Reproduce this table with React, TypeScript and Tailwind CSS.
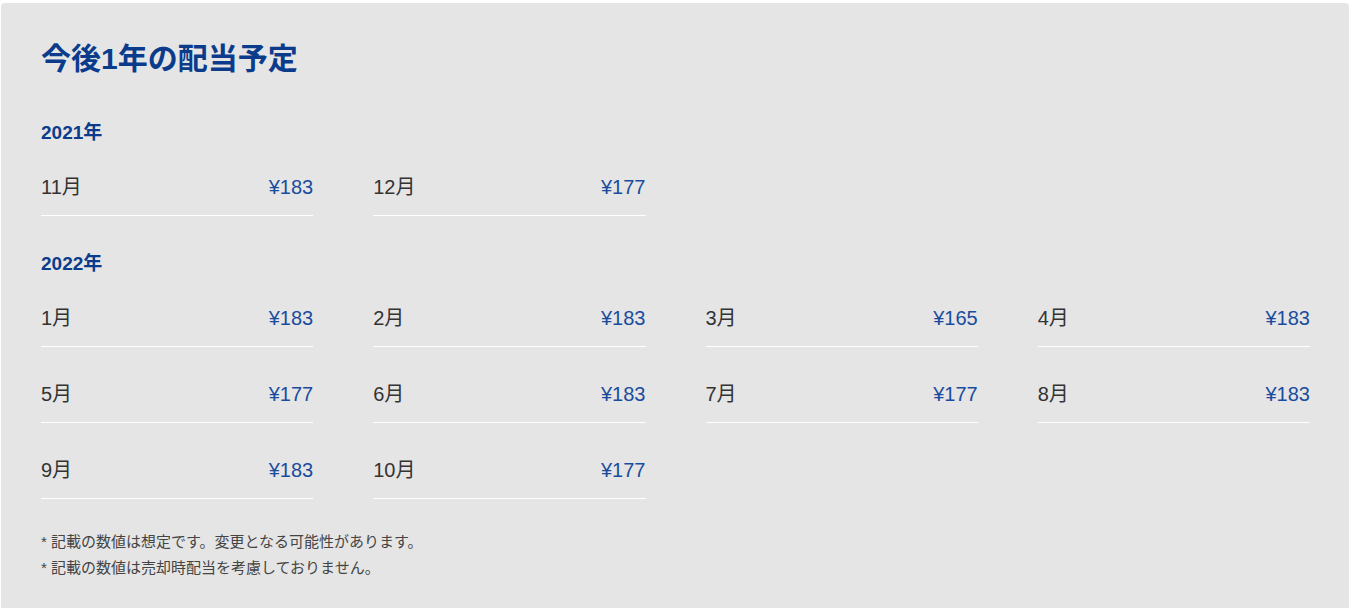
import React from 'react';

type Payout = { month: string; amount: string };

const schedule: { year: string; items: Payout[] }[] = [
  {
    year: '2021年',
    items: [
      { month: '11月', amount: '¥183' },
      { month: '12月', amount: '¥177' },
    ],
  },
  {
    year: '2022年',
    items: [
      { month: '1月', amount: '¥183' },
      { month: '2月', amount: '¥183' },
      { month: '3月', amount: '¥165' },
      { month: '4月', amount: '¥183' },
      { month: '5月', amount: '¥177' },
      { month: '6月', amount: '¥183' },
      { month: '7月', amount: '¥177' },
      { month: '8月', amount: '¥183' },
      { month: '9月', amount: '¥183' },
      { month: '10月', amount: '¥177' },
    ],
  },
];

const App: React.FC = () => {
  return (
    <div
      className="min-h-screen bg-white pt-[3px] px-[1px]"
      style={{ fontFamily: '"Liberation Sans", Arial, "Noto Sans CJK JP", sans-serif' }}
    >
      <div className="bg-[#e5e5e5] rounded-[4px] pt-[38px] pb-[40px] pl-10 pr-[39px]">
        {/* Title */}
        <h1 className="text-[30px] leading-[36px] font-bold text-[#0b3c8c]">今後1年の配当予定</h1>

        {/* Schedule */}
        <div className="mt-[42px] flex flex-col gap-[34px]">
          {schedule.map((section) => (
            <div key={section.year}>
              <h2 className="text-[19px] leading-[28px] font-bold text-[#0b3c8c]">{section.year}</h2>
              <div className="mt-[26px] grid grid-cols-4 gap-x-[60px] gap-y-[33px]">
                {section.items.map((item) => (
                  <div
                    key={item.month}
                    className="flex items-center justify-between pb-[14px] border-b border-white"
                  >
                    <span className="text-[20px] leading-[28px] text-[#333333]">{item.month}</span>
                    <span className="text-[20px] leading-[28px] text-[#1a4c9e]">{item.amount}</span>
                  </div>
                ))}
              </div>
            </div>
          ))}
        </div>

        {/* Notes */}
        <div className="mt-[30px] text-[15px] leading-[26px] text-[#444444]">
          <p>* 記載の数値は想定です。変更となる可能性があります。</p>
          <p>* 記載の数値は売却時配当を考慮しておりません。</p>
        </div>
      </div>
    </div>
  );
};

export default App;
